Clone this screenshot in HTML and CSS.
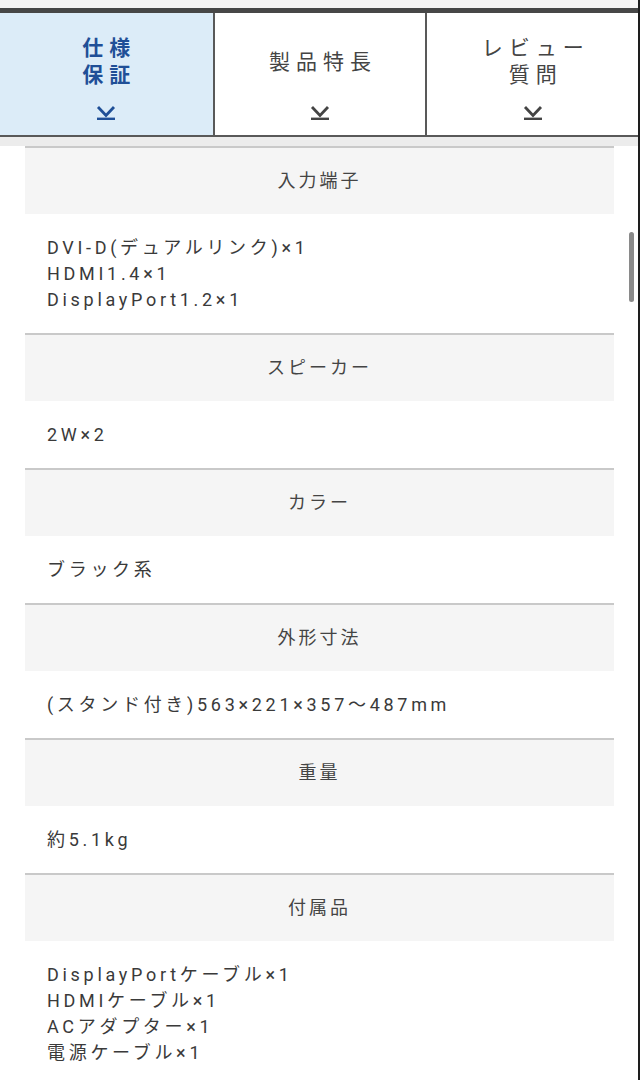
FILE: index.html
```html
<!DOCTYPE html>
<html lang="ja">
<head>
<meta charset="utf-8">
<title>仕様</title>
<link rel="stylesheet" href="styles.css">
</head>
<body>
<div class="screen">
  <div class="topstrip"></div>
  <nav class="tabs">
    <a class="tab active">
      <span class="tab-label">仕様<br>保証</span>
      <svg class="chev" viewBox="0 0 20 14" width="20" height="14"><path d="M2 1 L10 9.5 L18 1" fill="none" stroke="currentColor" stroke-width="2.8"/><path d="M1 12.8 H19" stroke="currentColor" stroke-width="2.4"/></svg>
    </a>
    <a class="tab">
      <span class="tab-label">製品特長</span>
      <svg class="chev" viewBox="0 0 20 14" width="20" height="14"><path d="M2 1 L10 9.5 L18 1" fill="none" stroke="currentColor" stroke-width="2.8"/><path d="M1 12.8 H19" stroke="currentColor" stroke-width="2.4"/></svg>
    </a>
    <a class="tab">
      <span class="tab-label">レビュー<br>質問</span>
      <svg class="chev" viewBox="0 0 20 14" width="20" height="14"><path d="M2 1 L10 9.5 L18 1" fill="none" stroke="currentColor" stroke-width="2.8"/><path d="M1 12.8 H19" stroke="currentColor" stroke-width="2.4"/></svg>
    </a>
  </nav>
  <div class="shade"></div>
  <dl class="specs">
    <dt>入力端子</dt>
    <dd>DVI-D(デュアルリンク)×1<br>HDMI1.4×1<br>DisplayPort1.2×1</dd>
    <dt>スピーカー</dt>
    <dd>2W×2</dd>
    <dt>カラー</dt>
    <dd>ブラック系</dd>
    <dt>外形寸法</dt>
    <dd>(スタンド付き)563×221×357～487mm</dd>
    <dt>重量</dt>
    <dd>約5.1kg</dd>
    <dt>付属品</dt>
    <dd>DisplayPortケーブル×1<br>HDMIケーブル×1<br>ACアダプター×1<br>電源ケーブル×1</dd>
  </dl>
  <div class="scrollbar"></div>
</div>
</body>
</html>
```

FILE: styles.css
```css
html, body {
  margin: 0;
  padding: 0;
  background: #fff;
}
body {
  font-family: Roboto, "Noto Sans CJK JP", sans-serif;
  color: #3c3c3c;
}
.screen {
  position: relative;
  width: 638px;
  min-height: 1080px;
  border-right: 2px solid #1e1e1e;
  overflow: hidden;
}
.topstrip {
  height: 8px;
  background: #f6f5f5;
}
.tabs {
  display: grid;
  grid-template-columns: 1fr 1fr 1fr;
  border-top: 5px solid #474747;
  border-bottom: 2px solid #595959;
  height: 122px;
}
.tab {
  display: flex;
  flex-direction: column;
  align-items: center;
  color: #444;
  text-decoration: none;
  border-left: 2px solid #595959;
}
.tab:first-child {
  border-left: none;
}
.tab.active {
  background: #dcecf8;
  color: #1f4f97;
  font-weight: 700;
}
.tab-label {
  height: 54px;
  margin-top: 22px;
  display: flex;
  align-items: center;
  justify-content: center;
  text-align: center;
  font-size: 21px;
  line-height: 27px;
  letter-spacing: 6px;
  padding-left: 6px;
}
.chev {
  margin-top: 17px;
  display: block;
}
.shade {
  height: 9px;
  background: #ececec;
}
.specs {
  margin: 0 24px 0 25px;
  padding: 0;
}
.specs dt {
  border-top: 2px solid #c9c9c9;
  background: #f5f5f5;
  text-align: center;
  padding: 20px 0;
  font-size: 18px;
  line-height: 26px;
  letter-spacing: 3px;
  color: #444;
}
.specs dd {
  margin: 0;
  padding: 21px 22px 20px;
  font-size: 18px;
  line-height: 26px;
  letter-spacing: 3.7px;
  color: #3a3a3a;
}
.scrollbar {
  position: absolute;
  left: 629px;
  top: 232px;
  width: 5px;
  height: 70px;
  border-radius: 3px;
  background: #8a8a8a;
}
```
